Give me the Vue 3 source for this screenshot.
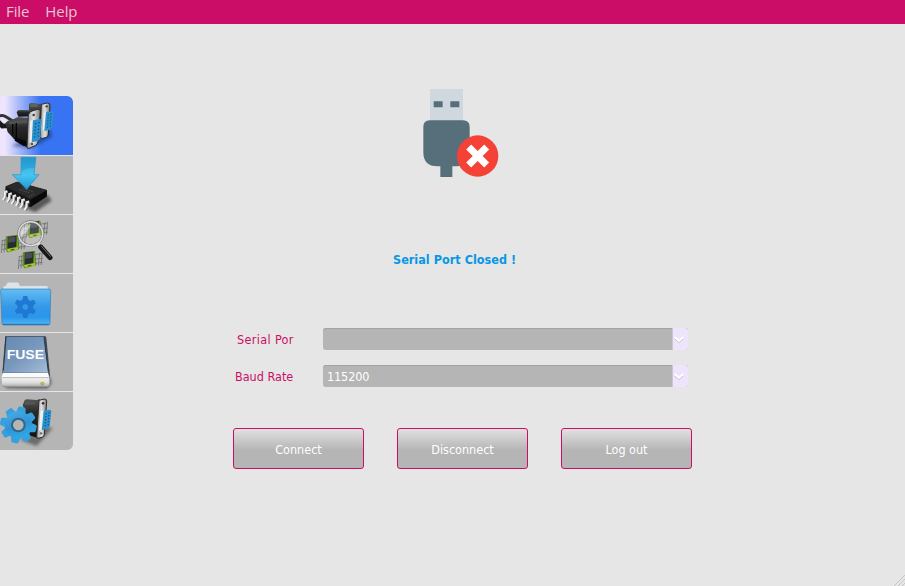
<script setup>
import { ref } from 'vue'

const menus = ['File', 'Help']
const tabs = ['serial', 'program', 'inspect', 'files', 'fuse', 'settings']
const active = ref('serial')
const fields = [
  { label: 'Serial Por', value: '', cls: 'port' },
  { label: 'Baud Rate', value: '115200', cls: 'baud' },
]
const actions = ['Connect', 'Disconnect', 'Log out']
const pins = [0, 1, 2, 3, 4]
const legs = [0, 1, 2, 3, 4, 5]
const chips = [[82, 26], [15, 69], [66, 117]]
const teeth = [0, 45, 90, 135, 180, 225, 270, 315]
</script>

<template>
  <div class="window">
    <svg class="defs" width="0" height="0" aria-hidden="true">
      <defs>
        <linearGradient id="metal" x1="0" x2="1"><stop offset="0" stop-color="#999" /><stop offset=".5" stop-color="#e2e2e2" /><stop offset="1" stop-color="#777" /></linearGradient>
        <linearGradient id="body" x1="0" y1="0" x2="0" y2="1"><stop offset="0" stop-color="#555" /><stop offset=".35" stop-color="#292929" /><stop offset="1" stop-color="#111" /></linearGradient>
        <linearGradient id="cyan" x1="0" y1="0" x2="0" y2="1"><stop offset="0" stop-color="#28a1d8" /><stop offset=".55" stop-color="#46c6f2" /><stop offset="1" stop-color="#2396d4" /></linearGradient>
        <linearGradient id="cog" gradientUnits="userSpaceOnUse" x1="-20" y1="-55" x2="20" y2="55"><stop offset="0" stop-color="#4fb2ea" /><stop offset=".5" stop-color="#2f93d6" /><stop offset="1" stop-color="#35b0ea" /></linearGradient>
        <linearGradient id="folder" x1="0" y1="0" x2="0" y2="1"><stop offset="0" stop-color="#62bdf3" /><stop offset=".5" stop-color="#3498e7" /><stop offset=".78" stop-color="#2b96ea" /><stop offset="1" stop-color="#53b6f3" /></linearGradient>
        <linearGradient id="drive" x1="0" y1="0" x2="1" y2="1"><stop offset="0" stop-color="#6688b1" /><stop offset=".5" stop-color="#7898bd" /><stop offset="1" stop-color="#a6bdd8" /></linearGradient>
        <linearGradient id="steel" x1="0" y1="0" x2="0" y2="1"><stop offset="0" stop-color="#f3f3f3" /><stop offset=".55" stop-color="#ddd" /><stop offset="1" stop-color="#aaa" /></linearGradient>
        <filter id="soft" x="-30%" y="-30%" width="160%" height="160%"><feGaussianBlur stdDeviation="4" /></filter>
      </defs>
    </svg>

    <nav class="menubar"><span v-for="m in menus" :key="m">{{ m }}</span></nav>

    <div class="content">
      <aside class="tabs">
        <button v-for="t in tabs" :key="t" class="tab" :class="{ active: active === t }" :aria-label="t" @click="active = t">
          <svg v-if="t === 'serial'" width="73" height="59" viewBox="0 18 219 177">
            <path d="M35 168 96 175 157 139 145 108Z" fill="#111b55" opacity=".45" filter="url(#soft)" />
            <path d="M-6 80Q7 72 19 81L42 95" fill="none" stroke="#333" stroke-width="9" />
            <path d="M-5 96 7 108 27 107 43 111" fill="none" stroke="#181818" stroke-width="14" />
            <path d="M87 46q0-7 8-7l25 3 5-1v100l-38-50Z" fill="url(#body)" />
            <path d="M91 42h22v9H90" fill="#606060" />
            <path d="m124 43 18-4q8 0 8 7l-5 86q0 8-6 10l-13 4-6-6Z" fill="url(#metal)" stroke="#292929" stroke-width="3" />
            <path d="m131 68 7-2v53l-10 3Z" fill="#eee" />
            <path d="m138 66 18-2q5 0 5 5l-5 43q-1 6-6 7l-17 4Z" fill="#2c91cd" />
            <g fill="#0b5685"><template v-for="n in pins" :key="n"><circle :cx="145 - n * .6" :cy="75 + n * 9" r="2.2" /><circle :cx="153 - n * .6" :cy="72 + n * 9" r="2.2" /></template></g>
            <circle cx="140" cy="49" r="3.5" fill="#444" />
            <path d="M16 99 24 92 41 87 54 81 92 85 87 171 70 163 42 147 23 126Z" fill="url(#body)" />
            <path d="M50 67q2-8 11-7l32 1v18l-38 1Z" fill="url(#body)" />
            <path d="m27 95 43-6 16 1v9l-57 4Z" fill="#515151" />
            <path d="m45 140 38 16v16l-16-6-23-14Z" fill="#080808" />
            <path d="M38 102v34M49 99v43" stroke="#050505" stroke-width="4" />
            <path d="m91 65 21-7q9-2 9 6l-7 91q-1 8-7 11l-20 9q-7 2-6-6l4-95Z" fill="url(#metal)" stroke="#292929" stroke-width="3" />
            <path d="m90 93 8-4v66l-10 3Z" fill="#eee" />
            <path d="m99 91 22-4q5 0 4 6l-5 52q-1 7-7 8l-18 4Z" fill="#2c91cd" />
            <g fill="#0b5685"><template v-for="n in pins" :key="n"><circle :cx="107 - n * .7" :cy="101 + n * 10" r="2.4" /><circle :cx="117 - n * .7" :cy="98 + n * 10" r="2.4" /></template></g>
            <circle cx="101" cy="75" r="4" fill="#444" /><circle cx="96" cy="162" r="4" fill="#555" />
          </svg>

          <svg v-else-if="t === 'program'" width="73" height="58" viewBox="0 6 219 174">
            <path d="m55 155 51 19 49-34-12-18Z" fill="#333" opacity=".7" filter="url(#soft)" />
            <path d="m17 97 34-14 90 25-1 20-49 32-77-35Z" fill="#171717" />
            <path d="m17 98 34-15 89 26-48 27Z" fill="#2a2a2a" />
            <path d="m92 137 48-27v17l-48 32Z" fill="#090909" />
            <path d="m57 106 32 11m-22-15 35 12M86 129l18-9" stroke="#666" stroke-width="2" stroke-dasharray="4 3" />
            <g v-for="n in legs" :key="n" :transform="`translate(${n * 13} ${n * 6.1})`"><path d="m23 113-7 2-1 14-5 9" fill="none" stroke="#777" stroke-width="9" /><path d="m22 112-7 2-1 14-6 10" fill="none" stroke="#eee" stroke-width="6" /></g>
            <path d="M63 10h45l-6 52h15L80 106 37 62h26Z" fill="url(#cyan)" stroke="#278fca" stroke-width="2" />
            <path d="M65 11h41l-3 31q-23-2-38 9Z" fill="#168bc5" opacity=".4" />
          </svg>

          <svg v-else-if="t === 'inspect'" width="73" height="58" viewBox="0 6 219 174">
            <g v-for="(p, i) in chips" :key="i" :transform="`translate(${p[0]} ${p[1]})`">
              <path d="m-9 14 67-9m-69 22 73-8m-70 21 70-9M-8 12l-3 39M0 9l-3 40M53 2l-4 39m12-41-4 39" fill="none" stroke="#717171" stroke-width="2.5" />
              <path d="m4 2 34-4 4 40-34 10-5-9Z" fill="#75a82a" stroke="#48720e" stroke-width="2" />
              <path d="m8 2 27-3-1 34-27 5Z" fill="#262c2f" />
              <path d="m10 4 22-2-2 15-21 3Z" fill="#474f55" />
              <path d="m6 40 33-6v6l-29 7Z" fill="#a9cb2b" /><path d="m17 42 11-2" stroke="#526f10" stroke-width="4" />
            </g>
            <circle cx="92" cy="62" r="36" fill="#eee" fill-opacity=".16" stroke="#777" stroke-width="8" />
            <circle cx="92" cy="62" r="36" fill="none" stroke="#ddd" stroke-width="4.5" />
            <path d="M62 69q-2-29 31-36-4 21-31 36Z" fill="#fff" opacity=".45" />
            <path d="m114 91 10 11" stroke="#ddd" stroke-width="9" /><path d="m122 102 28 32" stroke="#171717" stroke-width="15" stroke-linecap="round" /><path d="m123 98 29 33" stroke="#777" stroke-width="3" />
          </svg>

          <svg v-else-if="t === 'files'" width="73" height="58" viewBox="0 6 219 174">
            <path d="M9 53V45q0-3 8-4l4-7q1-3 5-3h26q4 0 5 4l3 6h78q6 0 6 5v8Z" fill="#dce4e9" stroke="#a8afb3" />
            <path d="M2 55q0-4 5-4h140q5 0 5 5l-2 98q0 5-5 5H11q-5 0-5-5Z" fill="url(#folder)" stroke="#357fb7" stroke-width="2" />
            <path d="M9 157h137" stroke="#216da8" stroke-width="3" />
            <g transform="translate(76 105)" fill="#1f78d1"><path v-for="a in [0,60,120,180,240,300]" :key="a" d="m-9-19 3-14H6L9-19Z" :transform="`rotate(${a})`" /><circle r="16" fill="none" stroke="#1f78d1" stroke-width="15" /></g>
          </svg>

          <svg v-else-if="t === 'fuse'" width="73" height="58" viewBox="0 6 219 174">
            <path d="m7 150 13 22 122 1 12-16-4-20Z" fill="#333" opacity=".6" filter="url(#soft)" />
            <path d="M16 15h119q3 0 4 5l11 113q2 34-9 34H15q-10 0-10-12l2-30Z" fill="#414c58" />
            <path d="M19 17h113l13 108H8Z" fill="url(#drive)" />
            <path d="m18 18-8 101M132 19l13 103" stroke="#283545" stroke-width="3" />
            <path d="M8 126h136l5 14H4Z" fill="#fbfbfb" />
            <path d="M4 140h145v19q-1 8-8 8H14q-9 0-10-8Z" fill="url(#steel)" stroke="#888" />
            <text x="20" y="85" textLength="112" lengthAdjust="spacingAndGlyphs">FUSE</text>
            <ellipse cx="127" cy="158" rx="5" ry="4" fill="#c9d010" stroke="#777" stroke-width="1.5" />
          </svg>

          <svg v-else width="73" height="58" viewBox="0 6 219 174">
            <path d="m61 150 49 18 48-53-30-6Z" fill="#333" opacity=".55" filter="url(#soft)" />
            <path d="M68 46 74 31q2-3 8-3l28 2 10-3-8 116-34-10-8-83Z" fill="url(#body)" />
            <path d="m76 34 31 1v8l-33 2Z" fill="#555" />
            <path d="m117 31 17-4q6 0 6 7l-7 99q0 6-5 8l-13 4q-6 0-5-6Z" fill="url(#metal)" stroke="#292929" stroke-width="3" />
            <circle cx="129" cy="40" r="4" fill="#333" /><circle cx="123" cy="130" r="3.5" fill="#666" />
            <path d="m121 64 11-3-5 59-10 2Z" fill="#eee" />
            <path d="m131 62 18-3q5 0 5 5l-5 45q0 6-6 7l-18 5Z" fill="#2c91cd" />
            <g fill="#0b5685"><template v-for="n in pins" :key="n"><circle :cx="138 - n * .6" :cy="71 + n * 9" r="2.3" /><circle :cx="147 - n * .6" :cy="68 + n * 9" r="2.3" /></template></g>
            <g transform="translate(55 105)">
              <path v-for="a in teeth" :key="a" d="m-16-31 5-21q1-3 4-3H7q3 0 4 3l5 21Z" :transform="`rotate(${a + 12})`" fill="#35a2df" />
              <circle r="29" fill="none" stroke="url(#cog)" stroke-width="24" />
              <circle r="19" fill="none" stroke="#356584" stroke-width="6" />
            </g>
          </svg>
        </button>
      </aside>

      <main class="panel">
        <svg class="usb" width="76" height="88" viewBox="0 0 228 264">
          <path d="M21 0h99v97H21Z" fill="#cfd8df" />
          <path d="M32 37h27v18H32Zm50 0h27v18H82Z" fill="#566f7a" />
          <path d="M20 94h100q20 0 20 20v78q0 40-40 40H88v32H52v-32h-9q-42 0-42-42v-76q0-20 19-20Z" fill="#566f7a" />
          <circle cx="164" cy="201" r="62" fill="#f44336" />
          <path d="m137 174 54 54m0-54-54 54" stroke="#fff" stroke-width="21" />
        </svg>
        <p class="status">Serial Port Closed !</p>
        <form class="fields" @submit.prevent>
          <div v-for="f in fields" :key="f.label" class="field">
            <span class="label" :class="f.cls">{{ f.label }}</span>
            <div class="combo"><span class="value">{{ f.value }}</span><span class="arrow"><svg width="10" height="7" viewBox="0 0 10 7"><path d="m.7 2.5 4.3 3.7 4.3-3.7" fill="none" stroke="#c4bfc9" stroke-width="1.3" /><path d="m.7 1 4.3 3.8L9.3 1" fill="none" stroke="#fff" stroke-width="2" /></svg></span></div>
          </div>
        </form>
        <div class="actions"><button v-for="a in actions" :key="a">{{ a }}</button></div>
      </main>
    </div>
    <svg class="grip" width="12" height="12" viewBox="0 0 12 12"><path d="M1 12 12 1M5 12l7-7M9 12l3-3" stroke="#c6c6c6" /></svg>
  </div>
</template>

<style>
body { margin: 0; background: #e6e6e6; overflow: hidden; }
</style>

<style scoped>
.window { width: 905px; height: 586px; position: relative; background: #e6e6e6; font-family: "DejaVu Sans Condensed", "DejaVu Sans", sans-serif; font-stretch: condensed; font-size: 12px; }
.defs { position: absolute; }
button { padding: 0; margin: 0; border: 0; font: inherit; }
svg { display: block; }
.menubar { height: 24px; background: #cb0d67; color: #e6c5d4; display: flex; gap: 16px; padding-left: 6px; font: 15px/22px "Open Sans", "Noto Sans", sans-serif; letter-spacing: -.1px; }
.content { display: flex; height: 562px; }
.tabs { width: 73px; height: 354px; margin-top: 72px; display: flex; flex-direction: column; gap: 1px; border-radius: 0 6px 6px 0; overflow: hidden; flex-shrink: 0; }
.tab { width: 73px; height: 58px; background: #b5b5b5; overflow: hidden; }
.tab:first-child { height: 59px; border-top-left-radius: 4px; }
.tab.active { background: linear-gradient(90deg, #f0e4fc 0, #eee5fd 5px, #3773f2 41px, #3773f2 100%); }
.tab text { font: bold 36px "Liberation Sans", sans-serif; fill: #fff; }
.panel { margin-left: 160px; padding-top: 65px; width: 459px; }
.usb { margin-left: 190px; }
.status { height: 20px; margin: 73px 0 0 160px; font-size: 12.5px; font-weight: bold; line-height: 20px; color: #0897e4; white-space: nowrap; letter-spacing: .03px; }
.fields { margin-top: 58px; display: grid; gap: 15px; }
.field { display: flex; height: 22px; }
.label { box-sizing: border-box; width: 90px; padding-left: 2px; color: #cb0d67; line-height: 23px; font-size: 12.5px; white-space: nowrap; }
.label.port { padding-left: 4px; letter-spacing: .36px; }
.combo { width: 365px; height: 22px; display: flex; box-sizing: border-box; background: #b5b5b5; border-radius: 3px; overflow: hidden; box-shadow: inset 0 1px #a2a2a2; }
.value { flex: 1; padding-left: 4px; color: #fff; line-height: 24px; font-size: 12.5px; letter-spacing: -.1px; }
.arrow { width: 16px; background: #eee5fd; border-left: 1px solid #cbc4d1; box-sizing: border-box; display: flex; justify-content: center; padding: 8px 3px 0 0; }
.actions { display: flex; gap: 33px; margin-top: 41px; }
.actions button { width: 131px; height: 41px; box-sizing: border-box; border: 1px solid #cb0d67; border-radius: 3px; background: linear-gradient(#e1e1e1, #b5b5b5 54%, #b5b5b5); color: #fff; font-size: 12.5px; line-height: 37px; padding-top: 2px; }
.grip { position: absolute; right: 0; bottom: 0; }
</style>
